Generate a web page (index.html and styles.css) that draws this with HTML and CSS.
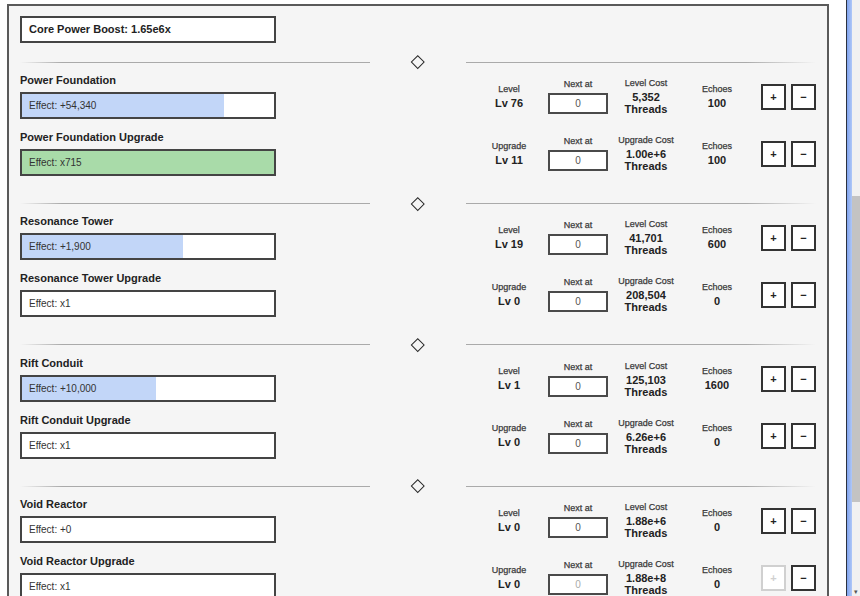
FILE: index.html
```html
<!DOCTYPE html>
<html>
<head>
<meta charset="utf-8">
<link rel="stylesheet" href="styles.css">
</head>
<body>
<div class="page">
  <div class="viewport">
    <div class="panel">
      <div class="boost">Core Power Boost: 1.65e6x</div>

      <div class="section">
        <div class="divider"><span class="line l"></span><span class="gem"><i></i></span><span class="line r"></span></div>
        <div class="row">
          <div class="left"><div class="title">Power Foundation</div><div class="bar blue" style="--p:80%">Effect: +54,340</div></div>
          <div class="stats">
            <div class="cell"><div class="lab">Level</div><div class="val">Lv 76</div></div>
            <div class="cell"><div class="lab next">Next at</div><input class="num" value="0"></div>
            <div class="cell"><div class="lab">Level Cost</div><div class="cost">5,352<br>Threads</div></div>
            <div class="cell"><div class="lab">Echoes</div><div class="val">100</div></div>
            <div class="btns"><button class="btn">+</button><button class="btn">−</button></div>
          </div>
        </div>
        <div class="row">
          <div class="left"><div class="title">Power Foundation Upgrade</div><div class="bar green" style="--p:100%">Effect: x715</div></div>
          <div class="stats">
            <div class="cell"><div class="lab">Upgrade</div><div class="val">Lv 11</div></div>
            <div class="cell"><div class="lab next">Next at</div><input class="num" value="0"></div>
            <div class="cell"><div class="lab">Upgrade Cost</div><div class="cost">1.00e+6<br>Threads</div></div>
            <div class="cell"><div class="lab">Echoes</div><div class="val">100</div></div>
            <div class="btns"><button class="btn">+</button><button class="btn">−</button></div>
          </div>
        </div>
      </div>

      <div class="section">
        <div class="divider"><span class="line l"></span><span class="gem"><i></i></span><span class="line r"></span></div>
        <div class="row">
          <div class="left"><div class="title">Resonance Tower</div><div class="bar blue" style="--p:64%">Effect: +1,900</div></div>
          <div class="stats">
            <div class="cell"><div class="lab">Level</div><div class="val">Lv 19</div></div>
            <div class="cell"><div class="lab next">Next at</div><input class="num" value="0"></div>
            <div class="cell"><div class="lab">Level Cost</div><div class="cost">41,701<br>Threads</div></div>
            <div class="cell"><div class="lab">Echoes</div><div class="val">600</div></div>
            <div class="btns"><button class="btn">+</button><button class="btn">−</button></div>
          </div>
        </div>
        <div class="row">
          <div class="left"><div class="title">Resonance Tower Upgrade</div><div class="bar green" style="--p:0%">Effect: x1</div></div>
          <div class="stats">
            <div class="cell"><div class="lab">Upgrade</div><div class="val">Lv 0</div></div>
            <div class="cell"><div class="lab next">Next at</div><input class="num" value="0"></div>
            <div class="cell"><div class="lab">Upgrade Cost</div><div class="cost">208,504<br>Threads</div></div>
            <div class="cell"><div class="lab">Echoes</div><div class="val">0</div></div>
            <div class="btns"><button class="btn">+</button><button class="btn">−</button></div>
          </div>
        </div>
      </div>

      <div class="section">
        <div class="divider"><span class="line l"></span><span class="gem"><i></i></span><span class="line r"></span></div>
        <div class="row">
          <div class="left"><div class="title">Rift Conduit</div><div class="bar blue" style="--p:53%">Effect: +10,000</div></div>
          <div class="stats">
            <div class="cell"><div class="lab">Level</div><div class="val">Lv 1</div></div>
            <div class="cell"><div class="lab next">Next at</div><input class="num" value="0"></div>
            <div class="cell"><div class="lab">Level Cost</div><div class="cost">125,103<br>Threads</div></div>
            <div class="cell"><div class="lab">Echoes</div><div class="val">1600</div></div>
            <div class="btns"><button class="btn">+</button><button class="btn">−</button></div>
          </div>
        </div>
        <div class="row">
          <div class="left"><div class="title">Rift Conduit Upgrade</div><div class="bar green" style="--p:0%">Effect: x1</div></div>
          <div class="stats">
            <div class="cell"><div class="lab">Upgrade</div><div class="val">Lv 0</div></div>
            <div class="cell"><div class="lab next">Next at</div><input class="num" value="0"></div>
            <div class="cell"><div class="lab">Upgrade Cost</div><div class="cost">6.26e+6<br>Threads</div></div>
            <div class="cell"><div class="lab">Echoes</div><div class="val">0</div></div>
            <div class="btns"><button class="btn">+</button><button class="btn">−</button></div>
          </div>
        </div>
      </div>

      <div class="section">
        <div class="divider"><span class="line l"></span><span class="gem"><i></i></span><span class="line r"></span></div>
        <div class="row">
          <div class="left"><div class="title">Void Reactor</div><div class="bar blue" style="--p:0%">Effect: +0</div></div>
          <div class="stats">
            <div class="cell"><div class="lab">Level</div><div class="val">Lv 0</div></div>
            <div class="cell"><div class="lab next">Next at</div><input class="num" value="0"></div>
            <div class="cell"><div class="lab">Level Cost</div><div class="cost">1.88e+6<br>Threads</div></div>
            <div class="cell"><div class="lab">Echoes</div><div class="val">0</div></div>
            <div class="btns"><button class="btn">+</button><button class="btn">−</button></div>
          </div>
        </div>
        <div class="row">
          <div class="left"><div class="title">Void Reactor Upgrade</div><div class="bar green" style="--p:0%">Effect: x1</div></div>
          <div class="stats">
            <div class="cell"><div class="lab">Upgrade</div><div class="val">Lv 0</div></div>
            <div class="cell"><div class="lab next">Next at</div><input class="num dim" value="0"></div>
            <div class="cell"><div class="lab">Upgrade Cost</div><div class="cost">1.88e+8<br>Threads</div></div>
            <div class="cell"><div class="lab">Echoes</div><div class="val">0</div></div>
            <div class="btns"><button class="btn off">+</button><button class="btn">−</button></div>
          </div>
        </div>
      </div>
    </div>
  </div>
  <div class="edge"></div>
  <div class="glow"></div>
  <div class="scroll"><div class="thumb"></div><div class="arrow">▾</div></div>
</div>
</body>
</html>
```

FILE: styles.css
```css
* { box-sizing: border-box; }
html, body { margin: 0; padding: 0; }
body {
  background: #fff;
  font-family: "Liberation Sans", Arial, sans-serif;
  color: #222;
}
.page {
  display: flex;
  width: 860px;
  height: 596px;
  overflow: hidden;
}
.viewport {
  width: 846px;
  flex: none;
  padding: 4px 0 0 7px;
  background: #fff;
}
.panel {
  width: 822px;
  height: 600px;
  background: #f5f5f5;
  border: 2px solid #5a5a5a;
  border-bottom: none;
  padding: 10px 11px 0 11px;
}
.boost {
  width: 256px;
  height: 27px;
  background: #fff;
  border: 2px solid #444;
  padding-left: 7px;
  font-size: 11px;
  font-weight: bold;
  line-height: 23px;
  color: #222;
  margin-bottom: 13px;
}
.section + .section { margin-top: 21.4px; }
.divider {
  display: flex;
  align-items: center;
  height: 12px;
  margin-bottom: 6px;
}
.line { flex: 1; height: 1px; }
.line.l { background: linear-gradient(to right, rgba(170,170,170,0) 0%, #aaa 12%, #aaa 100%); }
.line.r { background: linear-gradient(to right, #aaa 0%, #aaa 80%, rgba(170,170,170,0) 100%); }
.gem {
  width: 96px;
  display: flex;
  justify-content: center;
  align-items: center;
}
.gem i {
  display: block;
  width: 9.5px;
  height: 9.5px;
  border: 1.6px solid #2a2a2a;
  transform: rotate(45deg);
}
.row {
  display: flex;
  align-items: center;
  justify-content: space-between;
  height: 45px;
}
.row + .row { margin-top: 12px; }
.left { width: 256px; }
.title {
  font-size: 11px;
  font-weight: bold;
  line-height: 13px;
  color: #222;
  margin-bottom: 5px;
}
.bar {
  height: 27px;
  border: 2px solid #444;
  padding-left: 7px;
  font-size: 10px;
  line-height: 23px;
  color: #333;
}
.bar.blue { background: linear-gradient(to right, #c2d6f8 var(--p), #fff var(--p)); }
.bar.green { background: linear-gradient(to right, #a9dba9 var(--p), #fff var(--p)); }
.stats {
  display: grid;
  grid-template-columns: 70px 68px 68px 74px auto;
  align-items: center;
}
.cell { text-align: center; }
.lab {
  font-size: 9px;
  font-weight: normal;
  line-height: 11px;
  color: #3a3a3a;
  -webkit-text-stroke: 0.25px #3a3a3a;
}
.lab.next { margin-bottom: 3px; }
.val {
  font-size: 11px;
  font-weight: bold;
  line-height: 13px;
  color: #222;
  margin-top: 2px;
}
.cost {
  font-size: 11px;
  font-weight: bold;
  line-height: 12px;
  color: #222;
  margin-top: 2px;
}
.num {
  display: block;
  margin: 0 auto;
  width: 60px;
  height: 21px;
  border: 2px solid #4a4a4a;
  background: #fff;
  padding: 0;
  text-align: center;
  font-family: "Liberation Sans", Arial, sans-serif;
  font-size: 10px;
  color: #555;
  outline: none;
}
.num.dim { color: #aaa; }
.btns {
  display: flex;
  gap: 5px;
  margin-left: 7px;
}
.btn {
  width: 25px;
  height: 26px;
  padding: 0;
  border: 2px solid #333;
  background: #fff;
  font-family: "Liberation Sans", Arial, sans-serif;
  font-size: 11px;
  font-weight: bold;
  color: #222;
}
.btn.off { border-color: #d0d0d0; color: #d0d0d0; }
.edge { width: 1px; flex: none; background: #2b3240; }
.glow {
  width: 5px;
  flex: none;
  background: linear-gradient(to right, #7fa3ee, #b0c8f8);
}
.scroll {
  width: 8px;
  flex: none;
  background: #f1f1f1;
  display: flex;
  flex-direction: column;
}
.thumb {
  margin-top: 196px;
  height: 306px;
  background: #c3c3c3;
}
.arrow {
  margin-top: auto;
  font-size: 7px;
  line-height: 8px;
  color: #555;
  text-align: center;
}
```
